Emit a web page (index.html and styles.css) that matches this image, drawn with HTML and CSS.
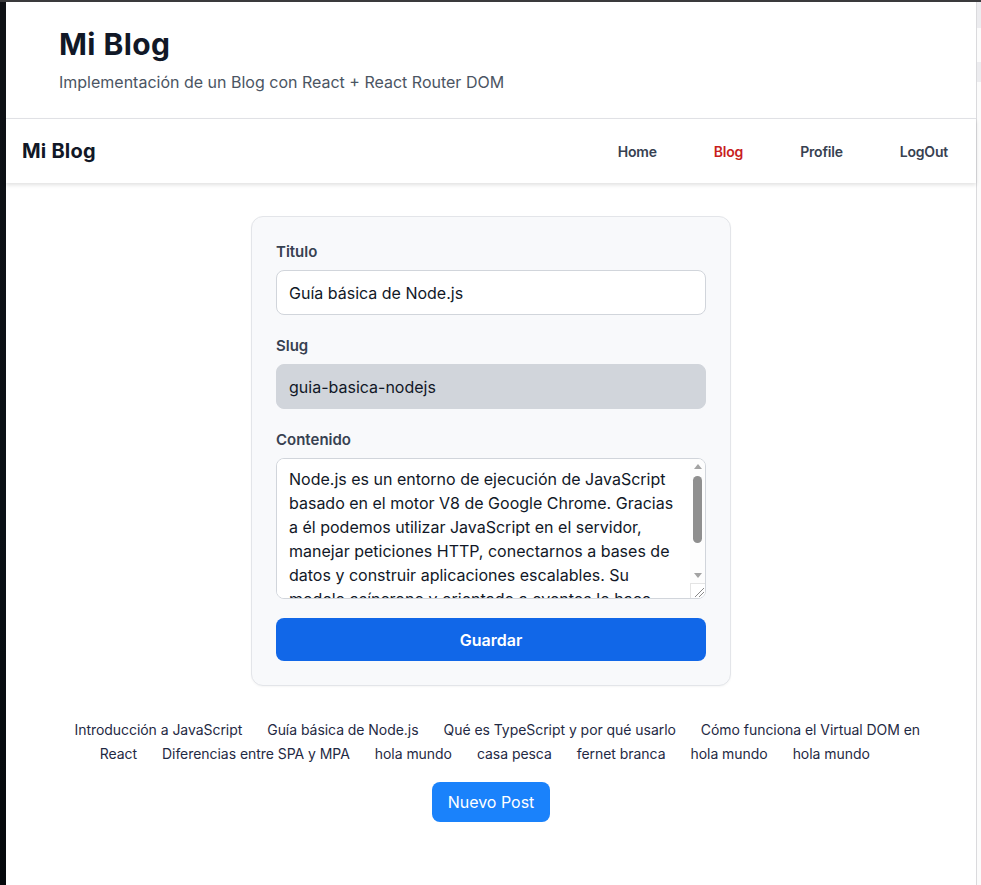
FILE: index.html
```html
<!DOCTYPE html>
<html lang="es">
<head>
<meta charset="utf-8">
<title>Mi Blog</title>
<link rel="stylesheet" href="styles.css">
</head>
<body>
<div class="frame">
  <div class="edge-left"></div>
  <div class="page">
    <header class="site-header">
      <h1 class="site-title">Mi Blog</h1>
      <p class="site-subtitle">Implementación de un Blog con React + React Router DOM</p>
    </header>
    <nav class="navbar">
      <div class="brand">Mi Blog</div>
      <ul class="nav-links">
        <li><a class="nav-link" href="#">Home</a></li>
        <li><a class="nav-link active" href="#">Blog</a></li>
        <li><a class="nav-link" href="#">Profile</a></li>
        <li><a class="nav-link" href="#">LogOut</a></li>
      </ul>
    </nav>
    <main class="content">
      <form class="post-form">
        <div class="field">
          <label class="field-label">Titulo</label>
          <input class="field-input" type="text" value="Guía básica de Node.js">
        </div>
        <div class="field">
          <label class="field-label">Slug</label>
          <input class="field-input readonly" type="text" value="guia-basica-nodejs" readonly>
        </div>
        <div class="field field-last">
          <label class="field-label">Contenido</label>
          <div class="textarea-box">
            <textarea class="field-textarea">Node.js es un entorno de ejecución de JavaScript basado en el motor V8 de Google Chrome. Gracias a él podemos utilizar JavaScript en el servidor, manejar peticiones HTTP, conectarnos a bases de datos y construir aplicaciones escalables. Su modelo asíncrono y orientado a eventos lo hace ideal para aplicaciones en tiempo real y APIs rápidas.</textarea>
            <div class="scrollbar" aria-hidden="true">
              <div class="sb-button"><span class="arrow-up"></span></div>
              <div class="sb-track"><div class="sb-thumb"></div></div>
              <div class="sb-button"><span class="arrow-down"></span></div>
              <div class="sb-resizer">
                <svg width="14" height="14" viewBox="0 0 14 14"><path d="M4 13 L13 4 M8 13 L13 8" stroke="#8a8a8a" stroke-width="1" fill="none"/></svg>
              </div>
            </div>
          </div>
        </div>
        <button class="btn-save" type="button">Guardar</button>
      </form>
      <div class="post-list"><a class="post-link" href="#">Introducción a JavaScript</a><a class="post-link" href="#">Guía básica de Node.js</a><a class="post-link" href="#">Qué es TypeScript y por qué usarlo</a><a class="post-link split-start" href="#">Cómo funciona el Virtual DOM en</a> <a class="post-link split-end" href="#">React</a><a class="post-link" href="#">Diferencias entre SPA y MPA</a><a class="post-link" href="#">hola mundo</a><a class="post-link" href="#">casa pesca</a><a class="post-link" href="#">fernet branca</a><a class="post-link" href="#">hola mundo</a><a class="post-link" href="#">hola mundo</a></div>
      <div class="actions">
        <button class="btn-new" type="button">Nuevo Post</button>
      </div>
    </main>
  </div>
  <div class="edge-right">
    <div class="edge-mark mark-1"></div>
    <div class="edge-mark mark-2"></div>
  </div>
</div>
</body>
</html>
```

FILE: styles.css
```css
* { box-sizing: border-box; }

html, body {
  margin: 0;
  padding: 0;
  background: #ffffff;
}

body {
  font-family: Inter, "Noto Sans", "Liberation Sans", sans-serif;
  color: #111827;
}

.frame {
  display: flex;
  min-height: 885px;
  border-top: 2px solid #3a3a3c;
}

.edge-left {
  width: 6px;
  flex: none;
  background: linear-gradient(#0f1115, #0a1016 60%, #05080b);
}

.page {
  flex: 1;
  min-width: 0;
  background: #ffffff;
}

.edge-right {
  width: 5px;
  flex: none;
  border-left: 1px solid #dadadd;
  background: #fbfbfb;
  display: flex;
  flex-direction: column;
}

.edge-mark {
  background: #ececef;
}

.mark-1 { height: 26px; }
.mark-2 { height: 20px; margin-top: 34px; }

/* header */
.site-header {
  padding: 24px 53px 24px;
  border-bottom: 1px solid #e3e4e8;
}

.site-title {
  margin: 0;
  font-size: 30px;
  line-height: 36px;
  font-weight: 700;
  letter-spacing: 0.4px;
  color: #111827;
}

.site-subtitle {
  margin: 8px 0 0;
  font-size: 16px;
  line-height: 24px;
  color: #4b5563;
}

/* navbar */
.navbar {
  height: 64px;
  display: flex;
  align-items: center;
  justify-content: space-between;
  padding: 0 28px 0 16px;
  background: #ffffff;
  box-shadow: 0 2px 4px rgba(0, 0, 0, 0.12);
  position: relative;
}

.brand {
  font-size: 20px;
  font-weight: 700;
  letter-spacing: 0.2px;
  color: #111827;
}

.nav-links {
  list-style: none;
  margin: 0;
  padding: 0;
  display: flex;
  gap: 57px;
}

.nav-link {
  font-size: 14px;
  font-weight: 600;
  letter-spacing: -0.2px;
  color: #374151;
  text-decoration: none;
}

.nav-link.active {
  color: #c81e1e;
}

/* content */
.content {
  padding: 33px 0 40px;
}

.post-form {
  width: 480px;
  margin: 0 auto;
  background: #f8f9fb;
  border: 1px solid #e3e5e9;
  border-radius: 12px;
  padding: 24px;
  box-shadow: 0 1px 2px rgba(0, 0, 0, 0.04);
}

.field {
  margin-bottom: 20px;
}

.field-last {
  margin-bottom: 19px;
}

.field-label {
  display: block;
  font-size: 15px;
  line-height: 21px;
  font-weight: 600;
  color: #374151;
  margin-bottom: 8px;
}

.field-input {
  display: block;
  width: 100%;
  height: 45px;
  padding: 0 12px;
  font-family: inherit;
  font-size: 16px;
  color: #111827;
  background: #ffffff;
  border: 1px solid #d1d5db;
  border-radius: 8px;
  outline: none;
}

.field-input.readonly {
  background: #d1d5db;
  border-color: #d1d5db;
}

.textarea-box {
  display: flex;
  height: 141px;
  border: 1px solid #d1d5db;
  border-radius: 8px;
  background: #ffffff;
  overflow: hidden;
}

.field-textarea {
  flex: 1;
  min-width: 0;
  height: 100%;
  padding: 8px 12px 0 12px;
  font-family: inherit;
  font-size: 16px;
  line-height: 24px;
  color: #111827;
  background: #ffffff;
  border: none;
  resize: none;
  outline: none;
  overflow: hidden;
}

.scrollbar {
  width: 15px;
  flex: none;
  display: flex;
  flex-direction: column;
  background: #fdfdfd;
}

.sb-button {
  height: 15px;
  flex: none;
  display: flex;
  align-items: center;
  justify-content: center;
}

.arrow-up {
  width: 0;
  height: 0;
  border-left: 4px solid transparent;
  border-right: 4px solid transparent;
  border-bottom: 5px solid #a3a3a3;
}

.arrow-down {
  width: 0;
  height: 0;
  border-left: 4px solid transparent;
  border-right: 4px solid transparent;
  border-top: 5px solid #a3a3a3;
}

.sb-track {
  flex: 1;
  padding: 2px 3px 0;
}

.sb-thumb {
  height: 67px;
  background: #8f8f8f;
  border-radius: 5px;
}

.sb-resizer {
  height: 15px;
  flex: none;
  border-top: 1px solid #e4e4e4;
  border-left: 1px solid #e4e4e4;
  background: #ffffff;
  display: flex;
}

.sb-resizer svg {
  display: block;
}

.btn-save {
  display: block;
  width: 100%;
  height: 43px;
  border: none;
  border-radius: 8px;
  background: #1167e8;
  color: #ffffff;
  font-family: inherit;
  font-size: 16px;
  font-weight: 600;
}

.post-list {
  max-width: 880px;
  margin: 32px auto 0;
  text-align: center;
  font-size: 14px;
  line-height: 24px;
  letter-spacing: -0.05px;
}

.post-link {
  margin: 0 12.5px;
  color: #1f2a44;
  text-decoration: none;
}

.post-link.split-start {
  margin-right: 0;
}

.post-link.split-end {
  margin-left: 0;
}

.actions {
  display: flex;
  justify-content: center;
  margin-top: 16px;
}

.btn-new {
  height: 40px;
  padding: 0 16px;
  border: none;
  border-radius: 8px;
  background: #1a82fb;
  color: #ffffff;
  font-family: inherit;
  font-size: 16px;
}
```
